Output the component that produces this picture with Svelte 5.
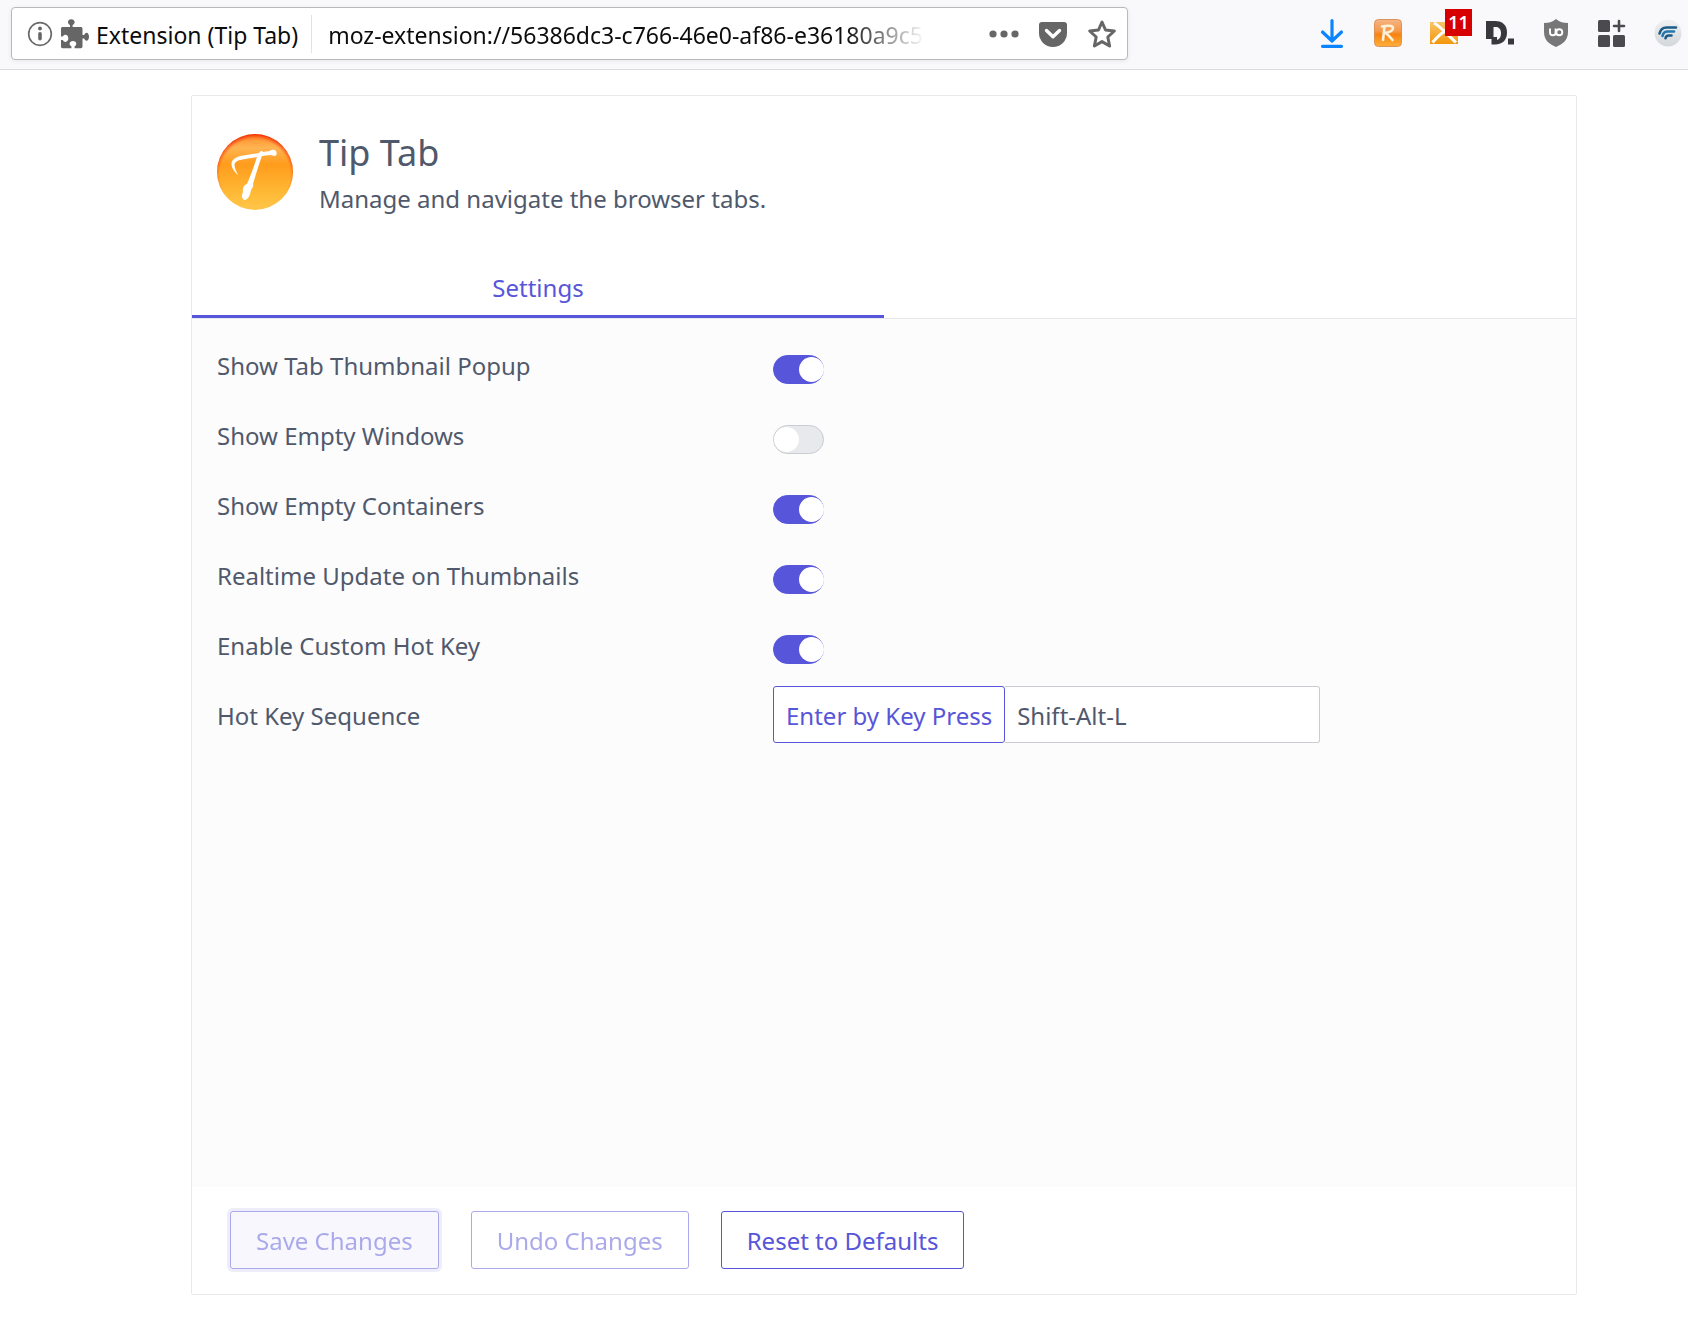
<script>
  let settings = $state([
    { id: 'thumb', label: 'Show Tab Thumbnail Popup', on: true },
    { id: 'windows', label: 'Show Empty Windows', on: false },
    { id: 'containers', label: 'Show Empty Containers', on: true },
    { id: 'realtime', label: 'Realtime Update on Thumbnails', on: true },
    { id: 'hotkey', label: 'Enable Custom Hot Key', on: true }
  ]);
  let sequence = $state('Shift-Alt-L');
</script>

<div class="page">
  <header class="toolbar">
    <div class="urlbar">
      <button class="icon" aria-label="Site information">
        <svg width="26" height="26" viewBox="0 0 26 26"><circle cx="13" cy="13" r="11.300" fill="none" stroke="#6b6b6b" stroke-width="1.700" /><circle cx="13" cy="7.500" r="1.900" fill="#666" /><rect x="11.200" y="11" width="3.600" height="8.500" rx="1.800" fill="#666" /></svg>
      </button>
      <svg class="puzzle" width="28" height="30" viewBox="0 0 28 30"><path fill="#666" d="M1.500 8H9V6.100C7.600 5.400 7 4.500 7 3.300 7 1.500 8.400.300 10.300.300s3.300 1.200 3.300 3c0 1.200-.6 2.100-2 2.800V8h8.200c.9 0 1.700.7 1.700 1.700V16h1.700c.6-1.500 1.500-2.200 2.400-2.200 1.400 0 2.400 1.700 2.400 4s-1 4-2.400 4c-.9 0-1.800-.7-2.400-2.200h-1.700v8c0 .9-.8 1.600-1.700 1.600h-6.200v-1.900c1.200-.7 1.700-1.500 1.700-2.600 0-1.700-1.400-2.800-3.300-2.800s-3.400 1.100-3.400 2.800c0 1.100.6 1.900 1.800 2.600v1.900H1.500C.7 29.200 0 28.500 0 27.600V21h1.700c.8 1.300 1.700 1.900 2.800 1.900 1.700 0 2.800-1.500 2.800-3.600s-1.100-3.500-2.800-3.500c-1.100 0-2 .6-2.800 1.800H0V9.700C0 8.700.7 8 1.500 8z" /></svg>
      <span class="identity">Extension (Tip Tab)</span>
      <input class="address" aria-label="Address" value="moz-extension://56386dc3-c766-46e0-af86-e36180a9c5b2" />
      <div class="actions">
        <button class="icon" aria-label="Page actions"><svg width="30" height="30" viewBox="0 0 30 30" fill="#666"><circle cx="4" cy="15" r="3.600" /><circle cx="15" cy="15" r="3.600" /><circle cx="26" cy="15" r="3.600" /></svg></button>
        <button class="icon" aria-label="Save to Pocket"><svg width="30" height="30" viewBox="0 0 30 30"><path fill="#666" d="M4 3h22a3 3 0 0 1 3 3v8a14 14 0 0 1-28 0V6a3 3 0 0 1 3-3z" /><path d="M8.500 11.500 15 17.700l6.500-6.200" fill="none" stroke="#fff" stroke-width="3.400" stroke-linecap="round" stroke-linejoin="round" /></svg></button>
        <button class="icon" aria-label="Bookmark this page"><svg width="30" height="30" viewBox="0 0 30 30"><path d="m15 3 3.500 8 8.800 1-6.500 6 1.800 9L15 22.600 7.400 27l1.800-9-6.500-6 8.800-1z" fill="none" stroke="#666" stroke-width="3" stroke-linejoin="round" /></svg></button>
      </div>
    </div>
    <nav class="addons" aria-label="Extensions">
      <button class="icon" aria-label="Downloads"><svg width="30" height="30" viewBox="0 0 30 30" fill="none" stroke="#0a84ff" stroke-width="3.200" stroke-linecap="round" stroke-linejoin="round"><path d="M15 2.500v20M5.500 14 15 23l9.500-9M5.500 28.300h19" /></svg></button>
      <button class="icon" aria-label="Reload manager"><svg width="30" height="30" viewBox="0 0 30 30"><defs><linearGradient id="r" x1="0" y1="0" x2="0" y2="1"><stop offset="0" stop-color="#f5b585" /><stop offset=".45" stop-color="#f59646" /><stop offset=".55" stop-color="#f7820f" /><stop offset="1" stop-color="#ffb03c" /></linearGradient></defs><rect x="1.500" y="1.500" width="27" height="27" rx="4" fill="url(#r)" stroke="#dc9358" /><path d="M9 8.500c4-.8 11-1.500 11 1.500 0 3-5 4.500-8 5 3 1 5 4 7.500 7M11.500 8.500 10 22" fill="none" stroke="#fdf0d8" stroke-width="2.600" stroke-linecap="round" stroke-linejoin="round" /></svg></button>
      <button class="icon mail" aria-label="Mail, 11 unread"><svg width="30" height="30" viewBox="0 0 30 30"><defs><linearGradient id="m" x1="0" y1="0" x2="0" y2="1"><stop offset="0" stop-color="#f9c468" /><stop offset="1" stop-color="#f3960c" /></linearGradient></defs><rect x="1" y="4" width="28" height="22" fill="url(#m)" /><path d="M5 5c6 3 15 13 22 19.500M26 6C18 11 10 16 3.500 24.500" fill="none" stroke="#fff" stroke-width="3" /></svg><span class="badge">11</span></button>
      <button class="icon" aria-label="Dictionary"><svg width="30" height="30" viewBox="0 0 30 30"><path fill="#38383d" fill-rule="evenodd" d="M1 3h9c8 0 12 4.500 12 11.500s-4 12-12 12H6.500V21H1zm7.500 6v10H12v3c3-1 4-3.500 4-7s-2-6-5-6z" /><rect x="23" y="20.500" width="6" height="6" fill="#38383d" /></svg></button>
      <button class="icon" aria-label="uBlock"><svg width="30" height="30" viewBox="0 0 30 30"><path fill="#777" d="M15 1c4 3 7 4 12 4v9c0 8-5 12-12 15C8 26 3 22 3 14V5c5 0 8-1 12-4z" /><path d="M9 10.500v4a2.800 2.800 0 0 0 5.600 0v-4m0 4v3" fill="none" stroke="#fff" stroke-width="1.900" /><circle cx="18.300" cy="14.300" r="3" fill="none" stroke="#fff" stroke-width="1.900" /></svg></button>
      <button class="icon" aria-label="Containers"><svg width="30" height="30" viewBox="0 0 30 30" fill="#4a4a4f"><rect x="1" y="2" width="12" height="12" rx="1.500" /><rect x="1" y="17" width="12" height="12" rx="1.500" /><rect x="16" y="17" width="12" height="12" rx="1.500" /><path d="M22 3v10M17 8h10" stroke="#4a4a4f" stroke-width="2.600" stroke-linecap="round" /></svg></button>
      <button class="icon" aria-label="Feeds"><svg width="30" height="30" viewBox="0 0 30 30"><defs><linearGradient id="f" x1="0" y1="0" x2="0" y2="1"><stop offset="0" stop-color="#f0f1f3" /><stop offset="1" stop-color="#d3d6da" /></linearGradient></defs><circle cx="15" cy="15" r="13.500" fill="url(#f)" /><g fill="none" stroke-width="2.600" stroke-linecap="round"><path d="M6.500 15.500c1-4 3-6 7-6H23" stroke="#1b5c87" /><path d="M9.500 18c.6-3 2-4.500 5-4.500H21" stroke="#2478ac" /><path d="M12.500 20.200c.5-2 1.500-2.700 3-2.700h3" stroke="#1b5c87" /></g></svg></button>
    </nav>
  </header>

  <main class="panel">
    <div class="brand">
      <svg class="logo" width="76" height="76" viewBox="0 0 76 76" aria-hidden="true">
        <defs>
          <linearGradient id="lg" x1="0" y1="0" x2="0" y2="1"><stop offset="0" stop-color="#ff8a24" /><stop offset=".18" stop-color="#ffb452" /><stop offset=".4" stop-color="#ff9c1c" /><stop offset=".8" stop-color="#ffbb38" /><stop offset="1" stop-color="#ffc64a" /></linearGradient>
          <radialGradient id="rim" cx=".5" cy=".54" r=".54"><stop offset=".86" stop-color="#f52" stop-opacity="0" /><stop offset="1" stop-color="#f02800" /></radialGradient>
        </defs>
        <circle cx="38" cy="38" r="38" fill="url(#lg)" /><circle cx="38" cy="38" r="38" fill="url(#rim)" />
        <path fill="#fff" d="M21 41C15 36 12 29 17 25c5-4 15-4 25-6 1-2 3-3 4-1l7-1c2-2 5-1 6 0 1 2 1 4-1 5l-5-1-8 1c-3 8-6 18-9 28 1 2-1 4-2 6-1 6-3 9-6 10-3 0-4-4-2-8-1-4 1-7 4-8 4-9 7-18 10-27-9 2-18 2-21 5-3 2-1 7 2 13z" />
      </svg>
      <div>
        <h1>Tip Tab</h1>
        <p>Manage and navigate the browser tabs.</p>
      </div>
    </div>

    <div class="tabs"><button class="tab">Settings</button></div>

    <section class="settings">
      {#each settings as row (row.id)}
        <div class="row">
          <label for={row.id}>{row.label}</label>
          <input class="switch" type="checkbox" id={row.id} bind:checked={row.on} />
        </div>
      {/each}
      <div class="row">
        <label for="seq">Hot Key Sequence</label>
        <div class="group">
          <button class="btn enter">Enter by Key Press</button>
          <input class="field" id="seq" type="text" bind:value={sequence} />
        </div>
      </div>
    </section>

    <footer>
      <button class="btn save" disabled>Save Changes</button>
      <button class="btn" disabled>Undo Changes</button>
      <button class="btn">Reset to Defaults</button>
    </footer>
  </main>
</div>

<style>
  :global(body) { margin: 0; background: #fff; }
  .page { box-sizing: border-box; min-height: 100vh; display: flex; flex-direction: column; font-family: "Noto Sans", "Open Sans", sans-serif; font-size: 24px; line-height: 36px; color: #50596c; padding-bottom: 22px; overflow: hidden; }
  .page * { box-sizing: border-box; }
  button, input { font: inherit; color: inherit; margin: 0; }
  button { cursor: pointer; }
  svg { display: block; flex: none; }
  .icon { border: 0; padding: 0; background: none; }
  .toolbar { padding: 7px 5px 9px 11px; background: #f9f9fb; border-bottom: 1px solid #dcdcde; display: flex; align-items: flex-start; justify-content: space-between; }
  .urlbar { flex: 0 1 1117px; min-width: 0; height: 53px; border: 1px solid #b9b9bc; border-radius: 4px; background: #fff; box-shadow: 0 1px 5px rgba(0, 0, 0, 0.08); display: flex; align-items: center; padding: 0 10px 0 15px; color: #0c0c0d; font-size: 23px; }
  .puzzle { margin: 0 7px 0 8px; }
  .identity { white-space: nowrap; padding: 2px 13px 0 0; border-right: 1px solid #e2e2e4; }
  .address { flex: 1; min-width: 0; border: 0; outline: 0; padding: 2px 0 0; margin: 0 64px 0 16px; background: none; mask-image: linear-gradient(to right, #000 calc(100% - 80px), transparent); }
  .actions { display: flex; gap: 19px; }
  .addons { display: flex; gap: 26px; padding-top: 11px; }
  .mail { position: relative; }
  .badge { position: absolute; left: 16px; top: -9px; width: 27px; height: 27px; background: #d70000; color: #fff; font-size: 18px; font-weight: 600; line-height: 27px; }
  .panel { flex: 1; display: flex; flex-direction: column; margin: 25px 111px 0 191px; border: 1px solid #e7e9ed; border-radius: 2px; }
  .brand { display: flex; gap: 26px; padding: 38px 25px 0; height: 162px; }
  h1 { margin: 0; font-size: 36px; line-height: 38px; font-weight: 400; }
  p { margin: 9px 0 0; }
  .tabs { border-bottom: 1px solid #e7e9ed; display: flex; }
  .tab { width: 50%; height: 60px; padding: 2px 0 0; border: 0; border-bottom: 3px solid #5755d9; background: none; color: #5755d9; }
  .settings { flex: 1; background: #fcfcfc; padding: 17px 25px; }
  .row { display: grid; grid-template-columns: 556px 1fr; align-items: start; height: 56px; margin-bottom: 14px; }
  .row label { padding-top: 12px; }
  .switch { appearance: none; display: block; width: 51px; height: 29px; margin-top: 19px; border-radius: 15px; border: 1px solid #caccd2; background: #e7e9ed; padding: 0; }
  .switch::before { content: ""; display: block; width: 25px; height: 25px; margin: 1px 0 0; border-radius: 50%; background: #fff; }
  .switch:checked { background: #5755d9; border-color: #5755d9; }
  .switch:checked::before { margin-left: 25px; }
  .group { display: flex; max-width: 547px; }
  .btn { height: 58px; padding: 2px 25px 0; border: 1px solid #5755d9; border-radius: 3px; background: #fff; color: #5755d9; white-space: nowrap; }
  .btn:disabled { opacity: 0.5; cursor: default; }
  .save { background: #f1f1fc; box-shadow: 0 0 0 3px rgba(87, 85, 217, 0.2); }
  .enter { height: 57px; padding: 2px 12px 0; }
  .field { flex: 1; min-width: 0; height: 57px; padding: 2px 12px 0; border: 1px solid #caccd2; border-left: 0; border-radius: 0 3px 3px 0; background: #fff; }
  footer { display: flex; gap: 32px; padding: 24px 38px 25px; background: #fff; }
</style>
